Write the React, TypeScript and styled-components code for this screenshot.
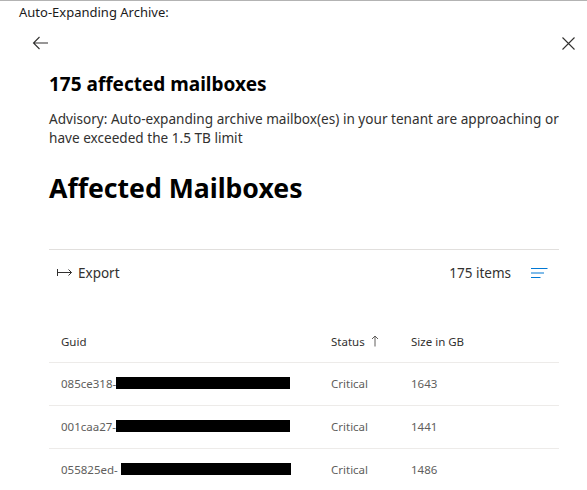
import React from "react";
import styled, { createGlobalStyle } from "styled-components";

const Global = createGlobalStyle`
  html, body { margin: 0; padding: 0; background: #fff; }
  body { font-family: "Noto Sans", "Open Sans", sans-serif; color: #323130; }
`;

const Page = styled.div`
  width: 587px;
  height: 490px;
  box-sizing: border-box;
  border-top: 1px solid #b3b3b3;
  overflow: hidden;
  background: #fff;
`;

const WindowTitle = styled.div`
  font-size: 13px;
  line-height: 18px;
  padding: 2px 0 0 19px;
  color: #1b1b1b;
`;

const NavRow = styled.div`
  display: flex;
  justify-content: space-between;
  align-items: center;
  height: 22px;
  margin-top: 11px;
  padding: 0 12px 0 32px;
`;

const IconButton = styled.div`
  display: flex;
  align-items: center;
  justify-content: center;
  color: #323130;
`;

const Content = styled.div`
  padding: 0 28px 0 49px;
`;

const Heading = styled.h2`
  margin: 17px 0 0;
  font-size: 19px;
  line-height: 26px;
  font-weight: 700;
  color: #000;
`;

const Advisory = styled.p`
  margin: 12px 0 0;
  font-size: 13.6px;
  line-height: 19px;
  color: #323130;
`;

const SectionTitle = styled.h1`
  margin: 23px 0 0;
  font-size: 26.6px;
  line-height: 36px;
  font-weight: 700;
  color: #000;
`;

const Divider = styled.div`
  margin-top: 43px;
  height: 1px;
  background: #e1dfdd;
`;

const Toolbar = styled.div`
  display: flex;
  align-items: center;
  justify-content: space-between;
  height: 45px;
  padding: 0 11px 0 8px;
`;

const ToolButton = styled.div`
  display: flex;
  align-items: center;
  gap: 5px;
  font-size: 13.5px;
  color: #323130;
`;

const RightTools = styled.div`
  display: flex;
  align-items: center;
  gap: 20px;
  font-size: 13.5px;
  color: #323130;
`;

const Table = styled.div`
  margin-top: 25px;
`;

const Row = styled.div<{ $header?: boolean }>`
  display: grid;
  grid-template-columns: 270px 80px 1fr;
  align-items: center;
  box-sizing: border-box;
  height: 43px;
  padding: 0 0 ${(p) => (p.$header ? "0" : "2px")} 12px;
  border-bottom: 1px solid #edebe9;
  font-size: 11.5px;
  color: ${(p) => (p.$header ? "#323130" : "#605e5c")};
`;

const HeaderCell = styled.div`
  display: flex;
  align-items: center;
  gap: 6px;
`;

const GuidCell = styled.div`
  display: flex;
  align-items: center;
`;

const Redaction = styled.span<{ $w: number; $offset?: number }>`
  display: inline-block;
  height: 12px;
  width: ${(p) => p.$w}px;
  margin-left: ${(p) => p.$offset ?? 0}px;
  background: #000;
`;

const BackIcon = () => (
  <svg width="17" height="14" viewBox="0 0 17 14" fill="none" stroke="#323130" strokeWidth="1.1">
    <path d="M16 7H1.5M7.5 1L1.5 7l6 6" />
  </svg>
);

const CloseIcon = () => (
  <svg width="13" height="13" viewBox="0 0 13 13" fill="none" stroke="#323130" strokeWidth="1.1">
    <path d="M0.5 0.5l12 12M12.5 0.5l-12 12" />
  </svg>
);

const ExportIcon = () => (
  <svg width="16" height="9" viewBox="0 0 16 9" fill="none" stroke="#323130" strokeWidth="1">
    <path d="M0.5 1v7M0.5 4.5h14M11.5 1.5l3 3-3 3" />
  </svg>
);

const MenuIcon = () => (
  <svg width="17" height="12" viewBox="0 0 17 12" fill="none" stroke="#0078d4" strokeWidth="1.1">
    <path d="M0 1.5h16.5M0 6h13M0 10.5h9.5" />
  </svg>
);

const SortUp = () => (
  <svg width="8" height="12" viewBox="0 0 8 12" fill="none" stroke="#605e5c" strokeWidth="1">
    <path d="M4 11.5V1M1 4l3-3 3 3" />
  </svg>
);

const rows = [
  { guid: "085ce318-", w: 174, off: 0, status: "Critical", size: "1643" },
  { guid: "001caa27-", w: 174, off: 0, status: "Critical", size: "1441" },
  { guid: "055825ed-", w: 170, off: 3, status: "Critical", size: "1486" },
];

export default function App() {
  return (
    <Page>
      <Global />
      <WindowTitle>Auto-Expanding Archive:</WindowTitle>
      <NavRow>
        <IconButton><BackIcon /></IconButton>
        <IconButton><CloseIcon /></IconButton>
      </NavRow>
      <Content>
        <Heading>175 affected mailboxes</Heading>
        <Advisory>
          Advisory: Auto-expanding archive mailbox(es) in your tenant are approaching or have exceeded the 1.5 TB limit
        </Advisory>
        <SectionTitle>Affected Mailboxes</SectionTitle>
        <Divider />
        <Toolbar>
          <ToolButton><ExportIcon />Export</ToolButton>
          <RightTools>
            <span>175 items</span>
            <MenuIcon />
          </RightTools>
        </Toolbar>
        <Table>
          <Row $header>
            <HeaderCell>Guid</HeaderCell>
            <HeaderCell>Status <SortUp /></HeaderCell>
            <HeaderCell>Size in GB</HeaderCell>
          </Row>
          {rows.map((r) => (
            <Row key={r.guid}>
              <GuidCell>{r.guid}<Redaction $w={r.w} $offset={r.off} /></GuidCell>
              <div>{r.status}</div>
              <div>{r.size}</div>
            </Row>
          ))}
        </Table>
      </Content>
    </Page>
  );
}
